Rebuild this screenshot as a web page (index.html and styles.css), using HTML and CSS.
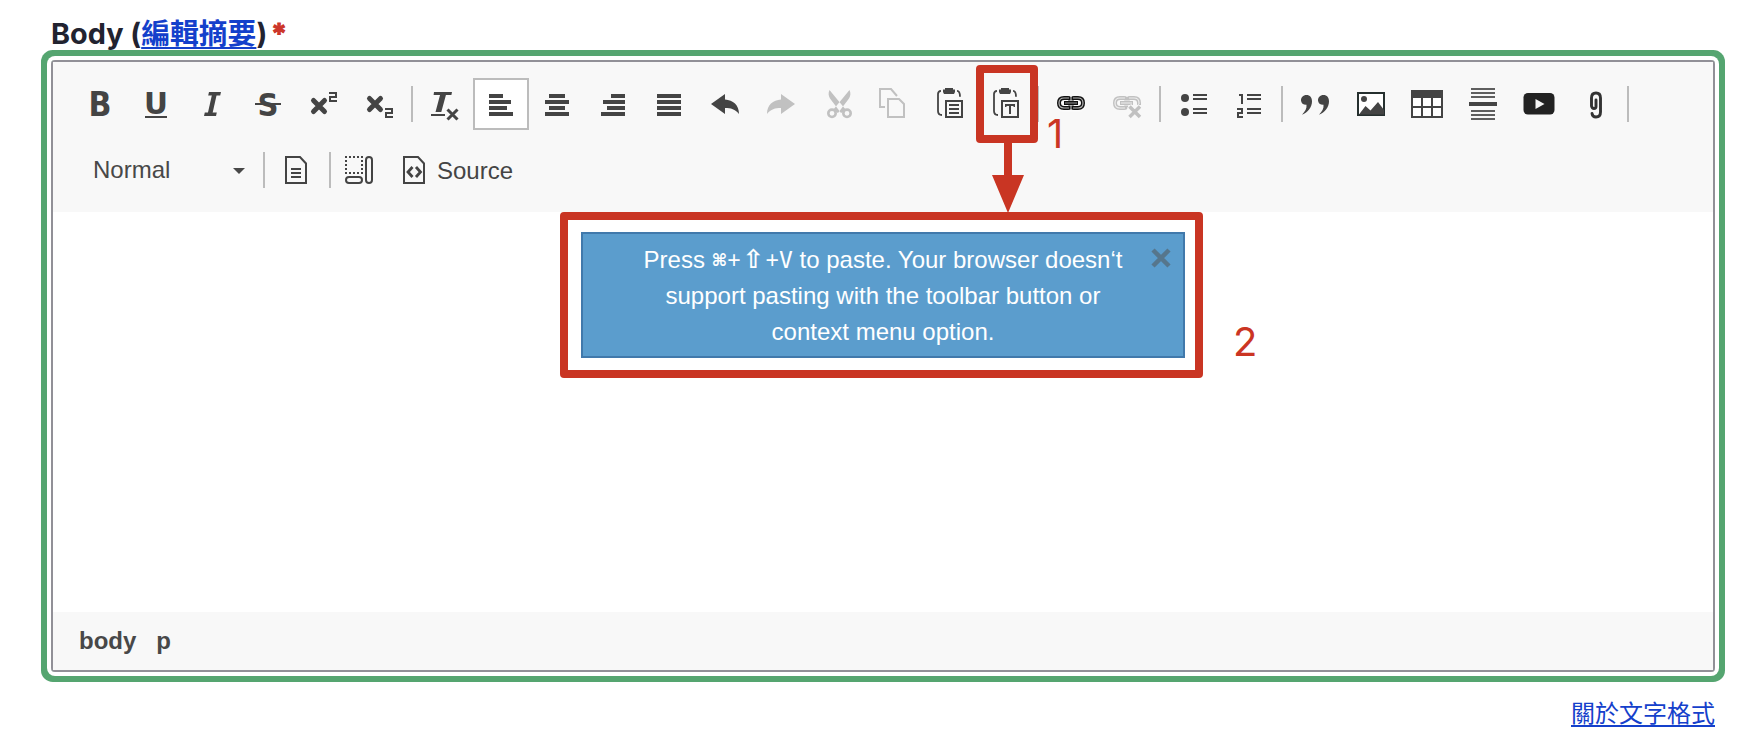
FILE: index.html
```html
<!DOCTYPE html>
<html lang="zh-Hant">
<head>
<meta charset="utf-8">
<title>Body</title>
<link rel="stylesheet" href="styles.css">
</head>
<body>
<div class="field">
  <div class="label">Body (<a href="#">編輯摘要</a>)<span class="required">*</span></div>
  <div class="editor">
    <div class="toolbar">
      <div class="row">
        <span class="btn"><svg viewBox="0 0 32 32"><text x="5.600" y="28" font-size="33" textLength="23" lengthAdjust="spacingAndGlyphs">B</text></svg></span>
        <span class="btn"><svg viewBox="0 0 32 32"><text x="5" y="25.6" font-size="29.500" textLength="24" lengthAdjust="spacingAndGlyphs">U</text><path d="M6 28h22v2H6z"/></svg></span>
        <span class="btn"><svg viewBox="0 0 32 32"><path class="l" stroke-width="4.600" d="M19.500 6l-4.500 20"/><path d="M14 4h12l-.8 3.500h-12zM9.800 24.500h12L21 28H9z"/></svg></span>
        <span class="btn"><svg viewBox="0 0 32 32"><text x="6.500" y="27.600" font-size="31.500" textLength="21" lengthAdjust="spacingAndGlyphs">S</text><path d="M4 15h26v2H4z"/></svg></span>
        <span class="btn"><svg viewBox="0 0 32 32"><path class="l cap" stroke-width="5" d="M6.500 12.500l11 11M17.500 12.500l-11 11"/><path class="l" d="M22 5h7v4h-6v4h7"/></svg></span>
        <span class="btn"><svg viewBox="0 0 32 32"><path class="l cap" stroke-width="5" d="M6.500 10.500l11 11M17.500 10.500l-11 11"/><path class="l" d="M22 21h7v4h-6v4h7"/></svg></span>
        <i class="sep"></i>
        <span class="btn"><svg viewBox="0 0 32 32"><path d="M5 4h18l-.6 3H4.600zM11.300 6h5.900L12.300 24H6.500z"/><path d="M2 26h14v2H2z"/><path class="l" stroke-width="3" d="M18.500 21.500l10 10M28.500 21.500l-10 10"/></svg></span>
        <span class="btn on"><svg viewBox="0 0 32 32"><path d="M4 6h14v4H4zM4 12h22v4H4zM4 18h18v4H4zM4 24h24v4H4z"/></svg></span>
        <span class="btn"><svg viewBox="0 0 32 32"><path d="M8 6h16v4H8zM4 12h24v4H4zM8 18h16v4H8zM4 24h24v4H4z"/></svg></span>
        <span class="btn"><svg viewBox="0 0 32 32"><path d="M14 6h14v4H14zM6 12h22v4H6zM10 18h18v4H10zM4 24h24v4H4z"/></svg></span>
        <span class="btn"><svg viewBox="0 0 32 32"><path d="M4 6h24v4H4zM4 12h24v4H4zM4 18h24v4H4zM4 24h24v4H4z"/></svg></span>
        <span class="btn"><svg viewBox="0 0 32 32"><path d="M2 16L16 6v5.500C24 12 30 17 30 26C26 21 22 20 16 20v6z"/></svg></span>
        <span class="btn off"><svg viewBox="0 0 32 32"><path d="M30 16L16 6v5.500C8 12 2 17 2 26C6 21 10 20 16 20v6z"/></svg></span>
        <span class="btn off"><svg viewBox="0 0 32 32"><path d="M8.500 2C7 5 7.500 8 9 10.500L20 25l5-3zM28.500 2c1.500 3 1 6-.5 8.500L17 25l-5-3z"/><circle fill="#f8f8f8" stroke="currentColor" stroke-width="2.600" cx="11" cy="25.300" r="3.700"/><circle fill="#f8f8f8" stroke="currentColor" stroke-width="2.600" cx="26" cy="25.300" r="3.700"/></svg></span>
        <span class="btn off"><svg viewBox="0 0 32 32"><path class="l" d="M8 19H3V1h11l6 7M11 11h11l5 5v13H11z"/></svg></span>
        <span class="btn"><svg viewBox="0 0 32 32"><path class="l" stroke-width="1.800" d="M8 2.800Q5 3 5 6v17q0 4 4 4M24 2.800q3 0 3 6"/><path d="M12 0h8v1.500h2V4l-1 2H11l-1-2V1.500h2z"/><path class="l" d="M13 13h16v16H13z"/><path d="M16 16h10v2H16zM16 20h10v2H16zM16 24h10v2H16z"/></svg></span>
        <span class="btn"><svg viewBox="0 0 32 32"><path class="l" stroke-width="1.800" d="M8 2.800Q5 3 5 6v17q0 4 4 4M24 2.800q3 0 3 6"/><path d="M12 0h8v1.500h2V4l-1 2H11l-1-2V1.500h2z"/><path class="l" d="M13 13h16v16H13z"/><path d="M16 16h10v3h-1.500v-1H22v8h-2v-8h-2.500v1H16z"/></svg></span>
        <i class="sep"></i>
        <span class="btn"><svg viewBox="0 0 32 32" class="halo"><path fill="none" stroke="#111" stroke-width="4" d="M15.300 12.500Q15.300 10 13 10H9Q4 10 4 15t5 5h4q2.300 0 2.300-2.500M16.700 12.500Q16.700 10 19 10h4Q28 10 28 15t-5 5h-4q-2.300 0-2.300-2.500"/><path fill="none" stroke="#b5b5b5" stroke-width="1.200" d="M14 10H9Q4 10 4 15t5 5h5M18 10h5Q28 10 28 15t-5 5h-5"/><path fill="#f8f8f8" d="M15.600 8h.8v14h-.8z"/><path fill="#111" d="M9 13h14v4H9z"/><path fill="#999" d="M10 14.500h12v1H10z"/></svg></span>
        <span class="btn off"><svg viewBox="0 0 32 32"><path class="l" stroke-width="4" d="M15.300 12.500Q15.300 10 13 10H9Q4 10 4 15t5 5h4q2.300 0 2.300-2.500M16.700 12.500Q16.700 10 19 10h4q5 0 5 5v2"/><path fill="none" stroke="#eee" stroke-width="1.200" d="M14 10H9Q4 10 4 15t5 5h5M18 10h5q5 0 5 5v1"/><path d="M9 13h13v4H9z"/><path fill="#eee" d="M10 14.500h11v1H10z"/><path fill="none" stroke="#f8f8f8" stroke-width="6" d="M18 18l11.500 11.500M29.500 18L18 29.500"/><path class="l" stroke-width="3.500" d="M18.500 18.500l10.500 10.500M29 18.500L18.500 29"/></svg></span>
        <i class="sep"></i>
        <span class="btn"><svg viewBox="0 0 32 32"><circle cx="8" cy="10" r="4"/><circle cx="8" cy="24" r="4"/><path d="M16 6h14v2H16zM16 10h14v2H16zM16 20h14v2H16zM16 24h14v2H16z"/></svg></span>
        <span class="btn"><svg viewBox="0 0 32 32"><path class="l" d="M6 7h3v9M4 21h5v4H5v4h5"/><path d="M14 6h14v2H14zM14 10h14v2H14zM14 20h14v2H14zM14 24h14v2H14z"/></svg></span>
        <i class="sep"></i>
        <span class="btn"><svg viewBox="0 0 32 32"><path id="q" d="M7.500 7C4 7 1.800 9.500 2 12.500c.2 3 2.500 4.500 5.500 4.300C8 20.500 6 23.500 3 26.800C9 24.500 13 19 13 13.500C13 9.500 11 7 7.500 7z"/><use href="#q" x="17"/></svg></span>
        <span class="btn"><svg viewBox="0 0 32 32"><path fill="#fff" stroke="#26302f" stroke-width="2" d="M3 5h26v22H3z"/><circle cx="9" cy="11" r="3"/><path d="M4 26.500L10.500 18l5 4.500L23 14l6 8v4.500z"/></svg></span>
        <span class="btn"><svg viewBox="0 0 32 32"><path fill="#fff" d="M0 8h32v22H0z"/><path fill-rule="evenodd" d="M0 2h32v28H0zM2 10v8h8v-8zM12 10v8h8v-8zM22 10v8h8v-8zM2 20v8h8v-8zM12 20v8h8v-8zM22 20v8h8v-8z"/></svg></span>
        <span class="btn"><svg viewBox="0 0 32 32"><path opacity=".85" d="M4 0h24v2H4zM4 4h24v2H4zM4 8h24v2H4zM4 22h24v2H4zM4 26h24v2H4zM4 30h24v2H4z"/><path d="M2 14h28v4H2z"/></svg></span>
        <span class="btn"><svg viewBox="0 0 32 32" class="soft"><rect fill="#222" x=".5" y="5" width="31" height="21.500" rx="4.500"/><path fill="#f4f4f4" d="M12.500 11v10l9-5z"/></svg></span>
        <span class="btn"><svg viewBox="0 0 32 32" class="soft"><path fill="none" stroke="#333" stroke-width="2.900" stroke-linecap="round" d="M17 12v6.500q0 2-2 2t-2.500-2.500V10q0-5 4.500-5t4.500 5v14q0 5-4.500 5-3.500 0-4-3.500"/></svg></span>
        <i class="sep"></i>
      </div>
      <div class="row">
        <span class="combo">Normal<i class="arrow"></i></span>
        <i class="sep"></i>
        <span class="btn"><svg viewBox="0 0 32 32"><path class="l" d="M5 3h14l6 6.500V29H5z"/><path d="M10 14h10v2H10zM10 18h10v2H10zM10 22h10v2H10z"/></svg></span>
        <i class="sep tight"></i>
        <span class="btn"><svg viewBox="0 0 32 32"><path class="l" stroke-width="2" stroke-dasharray="2 2" d="M2 3h18M2 19h18M3 6v12M19 6v12"/><rect class="l" x="23" y="3" width="6" height="26" rx="3"/><rect class="l" x="3" y="23" width="16" height="6" rx="3"/></svg></span>
        <span class="btn source"><svg viewBox="0 0 32 32"><path class="l" d="M5 3h14l6 6.500V29H5z"/><path class="l" stroke-width="2.800" d="M13.500 13l-4.500 5 4.500 5M17 13l4.500 5-4.500 5"/></svg><span>Source</span></span>
      </div>
    </div>
    <div class="content">
      <div class="notice">Press <kbd class="cmd">⌘</kbd><kbd>+</kbd><kbd class="shift">⇧</kbd><kbd>+</kbd><kbd class="key">V</kbd> to paste. Your browser doesn‘t<br>support pasting with the toolbar button or<br>context menu option.
        <svg class="close" viewBox="0 0 20 20"><path d="M2 2l16 16M18 2L2 18"/></svg>
      </div>
    </div>
    <div class="path"><span>body</span><span>p</span></div>
  </div>
  <a class="about" href="#">關於文字格式</a>
</div>
<div class="mark mark-button"></div>
<svg class="mark-arrow" viewBox="0 0 32 74"><path d="M12 0h8v36h12L16 74 0 36h12z"/></svg>
<div class="mark mark-notice"></div>
<span class="num num-one">1</span>
<span class="num num-two">2</span>
</body>
</html>
```
FILE: styles.css
```css
* { box-sizing: border-box; }
body {
  margin: 0;
  height: 748px;
  overflow: hidden;
  position: relative;
  background: #fff;
  font-family: "Liberation Sans", "Noto Sans CJK TC", sans-serif;
  color: #484848;
}
a { color: #1440cb; }
.field {
  display: flex;
  flex-direction: column;
  padding: 14px 39px 0 51px;
}
.label {
  height: 46px;
  line-height: 40px;
  font-family: Inter, "Noto Sans CJK TC", sans-serif;
  font-size: 28.8px;
  font-weight: 700;
  color: #222330;
  white-space: nowrap;
}
.label a { text-decoration-thickness: 2px; text-underline-offset: 3px; }
.required { color: #cc3629; margin-left: 4px; font-size: 28px; -webkit-text-stroke: 1px #cc3629; }
.editor {
  height: 612px;
  display: flex;
  flex-direction: column;
  border: 2px solid #919097;
  border-radius: 4px;
  box-shadow: 0 0 0 4px #fff, 0 0 0 10px #55a570;
}
.toolbar {
  height: 150px;
  padding: 16px 18px;
  display: flex;
  flex-direction: column;
  gap: 14px;
  background: #f8f8f8;
}
.row { display: flex; align-items: center; height: 52px; }
.btn {
  width: 56px;
  height: 52px;
  flex: none;
  display: flex;
  align-items: center;
  justify-content: center;
  color: #444;
}
.btn svg { width: 32px; height: 32px; fill: currentColor; overflow: visible; flex: none; }
.btn text { font-family: "DejaVu Sans", sans-serif; font-weight: 700; }
.btn .l { fill: none; stroke: currentColor; }
.btn path.l:not([stroke-width]), .btn rect.l { stroke-width: 2; }
.btn .cap { stroke-linecap: round; }
.btn.on { background: #fff; border: 2px solid #bcbcbc; }
.btn.off { color: #c1c1c1; }
.halo { filter: drop-shadow(0 1px 1px #fff); }
.soft { filter: blur(0.5px); }
.sep { width: 2px; height: 36px; margin: 0 4px; background: #bcbcbc; flex: none; }
.sep.tight { margin-right: 0; }
.combo {
  width: 188px;
  display: flex;
  align-items: center;
  justify-content: space-between;
  padding: 0 14px 0 22px;
  font-size: 24px;
}
.arrow { border: 6px solid transparent; border-top-color: #484848; border-bottom: 0; margin-top: 2px; }
.source { width: 140px; justify-content: flex-start; padding-left: 12px; gap: 6px; font-size: 24px; }
.source span { padding-top: 2px; }
.content {
  flex: 1;
  display: flex;
  justify-content: center;
  align-items: flex-start;
  padding-top: 20px;
}
.notice {
  position: relative;
  width: 604px;
  height: 126px;
  padding-top: 8px;
  background: #5b9dcd;
  border: 2px solid #4179ab;
  color: #fff;
  font-size: 24px;
  line-height: 36px;
  text-align: center;
  white-space: nowrap;
}
.notice kbd { font-family: "Liberation Sans", sans-serif; font-size: 23px; line-height: 1; }
.notice .cmd, .notice .shift { font-family: "DejaVu Sans", sans-serif; }
.notice .cmd { font-size: 17px; font-weight: 700; vertical-align: 2px; }
.notice .shift { display: inline-block; font-size: 26px; font-weight: 700; padding: 0 1.5px; }
.notice .key { font-family: "DejaVu Sans Mono", monospace; font-size: 23px; }
.close { position: absolute; right: 12px; top: 14px; width: 20px; height: 20px; }
.close path { fill: none; stroke: #56768c; stroke-width: 4.5; }
.path {
  height: 58px;
  display: flex;
  align-items: center;
  gap: 20px;
  padding: 0 26px;
  background: #f8f8f8;
  font-size: 24px;
  font-weight: 700;
}
.about {
  align-self: flex-end;
  margin-top: 22px;
  font-family: "Noto Sans CJK TC", sans-serif;
  font-size: 24px;
  line-height: 36px;
  text-decoration-thickness: 2px;
  text-underline-offset: 3px;
}
/* Annotations drawn over the editor */
.mark { position: absolute; border: 8px solid #c93523; border-radius: 4px; }
.mark-button { left: 976px; top: 65px; width: 62px; height: 78px; }
.mark-notice { left: 560px; top: 212px; width: 643px; height: 166px; }
.mark-arrow { position: absolute; left: 992px; top: 139px; width: 32px; height: 74px; fill: #c93523; }
.num {
  position: absolute;
  font-family: Inter, sans-serif;
  font-size: 40px;
  line-height: 40px;
  color: #cb3523;
}
.num-one { left: 1047px; top: 114px; }
.num-two { left: 1233px; top: 322px; }
```
